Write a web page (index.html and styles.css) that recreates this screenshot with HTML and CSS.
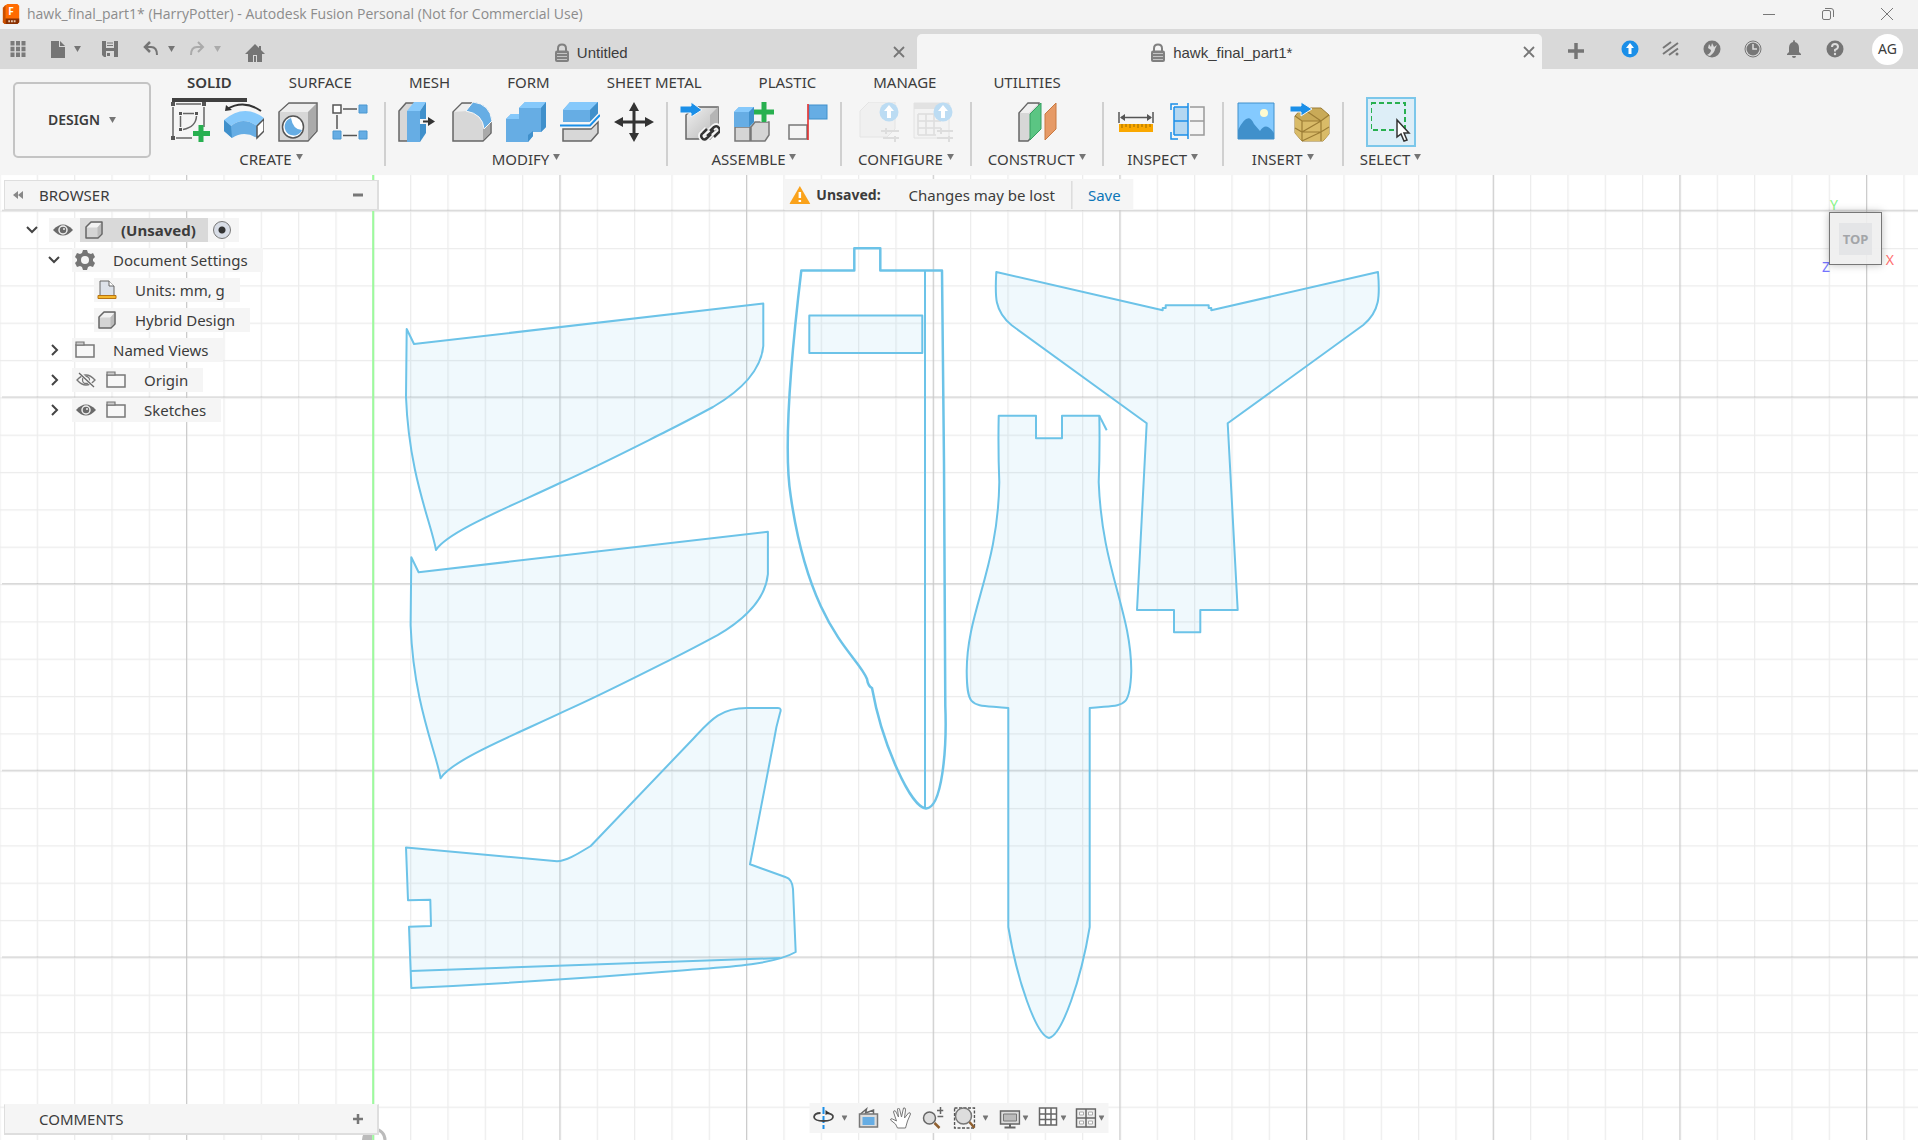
FILE: index.html
```html
<!DOCTYPE html>
<html lang="en">
<head>
<meta charset="utf-8">
<title>hawk_final_part1* (HarryPotter) - Autodesk Fusion Personal (Not for Commercial Use)</title>
<link rel="stylesheet" href="styles.css">
</head>
<body>
<svg class="defs" width="0" height="0" aria-hidden="true">
  <defs>
    <linearGradient id="gray-face" x1="0" y1="0" x2="1" y2="1"><stop offset="0" stop-color="#f0f0f0"/><stop offset="1" stop-color="#b8b8b8"/></linearGradient>
    <symbol id="i-body" viewBox="0 0 20 20"><path d="M2 7L7 2H18V14L14 18H2Z" fill="#d4d4d4" stroke="#666" stroke-width="1.5" stroke-linejoin="round"/><path d="M3 7.500L7.500 3H17L13.500 7.500Z" fill="#f2f2f2"/><path d="M13.500 7.500L17 3.500V13.500L13.500 17Z" fill="#bbb"/></symbol>
    <symbol id="i-eye" viewBox="0 0 20 20"><path d="M0 10Q10-1 20 10Q10 21 0 10Z" fill="#6a6a6a"/><circle cx="10" cy="10" r="4" fill="none" stroke="#eee" stroke-width="1.500"/><circle cx="11" cy="9" r="1" fill="#eee"/></symbol>
    <symbol id="i-eye-off" viewBox="0 0 20 20"><path d="M1 10Q10 0 19 10Q10 20 1 10Z" fill="none" stroke="#777" stroke-width="1.300"/><circle cx="10" cy="10" r="3.500" fill="none" stroke="#777" stroke-width="1.300"/><path d="M3 2L18 17" stroke="#f5f5f5" stroke-width="3"/><path d="M3 3L18 17" stroke="#666" stroke-width="1.300"/></symbol>
    <symbol id="i-folder" viewBox="0 0 20 20"><path d="M1 5V17H19V5Z" fill="#f7f7f7" stroke="#777" stroke-width="1.500"/><path d="M1 5V2H9V5Z" fill="#ccc" stroke="#777" stroke-width="1.200"/></symbol>
    <symbol id="i-lock" viewBox="0 0 16 20"><path d="M4 9V5.500Q4 1.500 8 1.500T12 5.500V9" fill="none" stroke="#808080" stroke-width="2"/><rect x="1" y="7.500" width="14" height="11.500" rx="2" fill="#808080"/><path d="M3 10.500H13M3 13.500H13M3 16.500H13" stroke="#c4c4c4"/></symbol>
    <symbol id="i-x" viewBox="0 0 14 14"><path d="M2 2L12 12M12 2L2 12" stroke="#777" stroke-width="1.800" fill="none"/></symbol>
    <symbol id="i-tri" viewBox="0 0 8 7"><path d="M0 0H8L4 7Z" fill="currentColor"/></symbol>
  </defs>
</svg>

<header class="titlebar">
  <svg class="app-logo" viewBox="0 0 18 22"><path d="M2 2L5 0H16L18 2V20L16 22H2L0 20Z" fill="#ff6b00"/><path d="M0 4L3 1V22H2L0 20Z" fill="#c94f00"/><path d="M3 16H18V20L16 22H3Z" fill="#8a3000"/><text x="6" y="12" class="logo-letter">F</text><path d="M6 19H14" stroke="#e8c8b0" stroke-width="2" stroke-dasharray="2 1"/></svg>
  <h1 class="window-title">hawk_final_part1* (HarryPotter) - Autodesk Fusion Personal (Not for Commercial Use)</h1>
  <div class="window-controls">
    <button aria-label="Minimize"><svg width="14" height="14" viewBox="0 0 14 14"><path d="M1 7.500H13" stroke="#777"/></svg></button>
    <button aria-label="Restore"><svg width="14" height="14" viewBox="0 0 14 14"><rect x="1.500" y="3.500" width="8" height="9" rx="1.500" fill="none" stroke="#777"/><path d="M4 1.500H10Q12.500 1.500 12.500 4V10" fill="none" stroke="#777"/></svg></button>
    <button aria-label="Close window"><svg width="14" height="14" viewBox="0 0 14 14"><path d="M1 1L13 13M13 1L1 13" stroke="#777"/></svg></button>
  </div>
</header>

<div class="tabbar">
  <div class="quick-access">
    <button class="qa-apps" aria-label="Show data panel"><svg width="16" height="16" viewBox="0 0 16 16"><path d="M2.500 0V16M8 0V16M13.500 0V16" stroke="#7a7a7a" stroke-width="4" stroke-dasharray="4.500 1.200"/></svg></button>
    <button class="qa-file" aria-label="File"><svg width="14" height="17" viewBox="0 0 14 17"><path d="M0 0H8V6H14V17H0Z" fill="#757575"/><path d="M9 0L14 5H9Z" fill="#757575"/></svg><svg class="tri"><use href="#i-tri"/></svg></button>
    <button class="qa-save" aria-label="Save document"><svg width="16" height="16" viewBox="0 0 16 16"><path d="M0 0H16V16H2L0 14Z" fill="#757575"/><path d="M4 0H12V7H4ZM4 10H12V16H4Z" fill="#dadada"/><path d="M5 2H11M5 4.500H11" stroke="#757575"/><path d="M5 12H8V15H5Z" fill="#757575"/></svg></button>
    <button class="qa-undo" aria-label="Undo"><svg width="16" height="16" viewBox="0 0 16 16"><path d="M2 6H8Q14 6 14 14" fill="none" stroke="#757575" stroke-width="2"/><path d="M7 1L2 6L7 11" fill="none" stroke="#757575" stroke-width="2.500"/></svg><svg class="tri"><use href="#i-tri"/></svg></button>
    <button class="qa-redo" aria-label="Redo"><svg width="16" height="16" viewBox="0 0 16 16"><path d="M14 6H8Q2 6 2 14" fill="none" stroke="#aaa" stroke-width="2"/><path d="M9 1L14 6L9 11" fill="none" stroke="#aaa" stroke-width="2"/></svg><svg class="tri"><use href="#i-tri"/></svg></button>
    <button class="qa-home" aria-label="Home"><svg width="20" height="18" viewBox="0 0 20 18"><path d="M0 10L10 0L14 4V2H16V6L20 10H17V18H12V11H8V18H3V10Z" fill="#757575"/><path d="M9 12H11V18H9Z" fill="#757575"/></svg></button>
  </div>
  <nav class="doc-tabs">
    <div class="doc-tab"><span class="doc-name"><svg width="16" height="20"><use href="#i-lock"/></svg>Untitled</span><button class="tab-close" aria-label="Close Untitled"><svg width="14" height="14"><use href="#i-x"/></svg></button></div>
    <div class="doc-tab is-active"><span class="doc-name"><svg width="16" height="20"><use href="#i-lock"/></svg>hawk_final_part1*</span><button class="tab-close" aria-label="Close hawk_final_part1"><svg width="14" height="14"><use href="#i-x"/></svg></button></div>
  </nav>
  <div class="account-tools">
    <button class="new-tab" aria-label="New design"><svg width="18" height="18" viewBox="0 0 18 18"><path d="M9 1V17M1 9H17" stroke="#757575" stroke-width="3.500"/></svg></button>
    <button aria-label="Upgrade"><svg width="18" height="18" viewBox="0 0 18 18"><circle cx="9" cy="9" r="8.500" fill="#1b8fe8"/><path d="M9 3L13 8H10.500V14H7.500V8H5Z" fill="#fff"/></svg></button>
    <button aria-label="Extensions"><svg width="18" height="18" viewBox="0 0 18 18"><path d="M1 8L9 2M1 14L16 3M7 15L16 8.500" stroke="#777" stroke-width="2"/><circle cx="15" cy="14" r="1.500" fill="#777"/></svg></button>
    <button aria-label="Online status"><svg width="18" height="18" viewBox="0 0 18 18"><circle cx="9" cy="9" r="8.500" fill="#777"/><path d="M4 15Q8 13 8 10L5 8L6 4L8 7L9 3L11 7L14 5L12 9Q12 12 7 16Z" fill="#d9d9d9"/></svg></button>
    <button aria-label="Job status"><svg width="18" height="18" viewBox="0 0 18 18"><circle cx="9" cy="9" r="8" fill="none" stroke="#777"/><circle cx="9" cy="9" r="6.500" fill="#777"/><path d="M9 4V9H13" fill="none" stroke="#ddd" stroke-width="1.500"/></svg></button>
    <button aria-label="Notifications"><svg width="18" height="18" viewBox="0 0 18 18"><path d="M9 0Q10 0 10 2Q14 3 14 8V12L16 14V15H2V14L4 12V8Q4 3 8 2Q8 0 9 0ZM7 16H11Q11 18 9 18T7 16Z" fill="#757575"/></svg></button>
    <button aria-label="Help"><svg width="18" height="18" viewBox="0 0 18 18"><circle cx="9" cy="9" r="8.500" fill="#757575"/><path d="M6 7Q6 4 9 4T12 7Q12 8.500 9 10V11.500" fill="none" stroke="#ddd" stroke-width="2"/><circle cx="9" cy="14" r="1.200" fill="#ddd"/></svg></button>
    <button class="avatar" aria-label="Account AG">AG</button>
  </div>
</div>

<section class="ribbon">
  <button class="workspace">DESIGN<svg class="tri"><use href="#i-tri"/></svg></button>
  <div class="ribbon-main">
    <nav class="ribbon-tabs">
      <button class="is-active">SOLID</button><button>SURFACE</button><button>MESH</button><button>FORM</button><button>SHEET METAL</button><button>PLASTIC</button><button>MANAGE</button><button>UTILITIES</button>
    </nav>
    <div class="groups">
      <div class="group">
        <div class="tools">
          <button aria-label="Create sketch"><svg viewBox="0 0 40 40"><path d="M3 5V34M6 2H31M34 5V25M6 36H22" fill="none" stroke="#666" stroke-width="1.500"/><path d="M10.500 14V25M13 11.500H24M26.500 14Q26 25 13 27.500" fill="none" stroke="#666" stroke-width="1.500"/><path d="M1 0H5V4H1ZM32 0H36V4H32ZM1 34H5V38H1ZM9 10H12V13H9ZM25 10H28V13H25ZM9 26H12V29H9Z" fill="#555"/><path d="M31 23V40M23 31.500H40" stroke="#28b050" stroke-width="5"/></svg></button>
          <button aria-label="Revolve"><svg viewBox="0 0 40 40"><path d="M0 18Q20 1 40 16L33 24Q19 14 7 24Z" fill="#86c9fb"/><path d="M0 18L7 24Q19 14 33 24V36Q20 28 8 36L0 29Z" fill="#66ade4"/><path d="M0 18L7 24L8 36L0 29Z" fill="#4090cb"/><path d="M33 24L40 17V29L33 36Z" fill="#fff" stroke="#555" stroke-width="1.500"/><path d="M3 7Q20-3 37 9" fill="none" stroke="#333" stroke-width="2"/><path d="M1 9L2 3L8 8Z" fill="#333"/></svg></button>
          <button aria-label="Hole"><svg viewBox="0 0 40 40"><path d="M1 10L11 1H39V29L30 39H1Z" fill="#d7d7d7" stroke="#666" stroke-width="1.500"/><path d="M2 10L11 2H38L30 10Z" fill="#eee"/><path d="M30 10L38 2V29L30 38Z" fill="#aaa"/><ellipse cx="15" cy="25" rx="10.500" ry="11" fill="#fff" stroke="#555" stroke-width="1.500"/><path d="M13 16A9 9 0 1 0 24 28Q15 28 13 16Z" fill="#66ade4"/></svg></button>
          <button aria-label="Rectangular pattern"><svg viewBox="0 0 40 40"><path d="M11 7H25M5 13V27M11 33.500H25" stroke="#555" stroke-width="1.500"/><rect x="1" y="3" width="8" height="8" fill="#fff" stroke="#555" stroke-width="1.500"/><path d="M27 3H35V11H27ZM1 29H9V37H1ZM27 29H35V37H27Z" fill="#66ade4" stroke="#4b97d0"/></svg></button>
        </div>
        <button class="group-menu">CREATE<svg class="tri"><use href="#i-tri"/></svg></button>
      </div>
      <div class="group">
        <div class="tools">
          <button aria-label="Press pull"><svg viewBox="0 0 40 40"><path d="M1 9L8 1H16V37L10 39H1Z" fill="#d7d7d7" stroke="#666" stroke-width="1.500"/><path d="M9 9L16 0H28L22 9Z" fill="#86c9fb"/><path d="M9 9H22V40H9Z" fill="#66ade4"/><path d="M22 9L28 0V31L22 40Z" fill="#4090cb"/><path d="M22 19.500H34" stroke="#f5f5f5" stroke-width="5"/><path d="M25 19.500H33" stroke="#333" stroke-width="2"/><path d="M30 15L37 19.500L30 24Z" fill="#333"/></svg></button>
          <button aria-label="Fillet"><svg viewBox="0 0 40 40"><path d="M1 10L10 1H22Q39 4 39 22V31L31 39H1Z" fill="#d7d7d7" stroke="#666" stroke-width="1.500"/><path d="M2 10L10 2H22L15 9Z" fill="#eee"/><path d="M31 25L38 18V31L31 38Z" fill="#aaa"/><path d="M14 9L21 0Q38 2 40 19L32 27Q31 12 14 9Z" fill="#66ade4" stroke="#f8f8f8"/></svg></button>
          <button aria-label="Combine"><svg viewBox="0 0 40 40"><path d="M0 17L5 12H13V6L19 0H40V25L35 30H27V34L22 40H0Z" fill="#66ade4"/><path d="M0 17L5 12H13V17ZM13 6L19 0H40L35 6Z" fill="#86c9fb"/><path d="M35 6L40 0V25L35 30ZM22 33L27 29V34L22 40Z" fill="#4090cb"/></svg></button>
          <button aria-label="Split body"><svg viewBox="0 0 40 40"><path d="M3 8L10 0H38V14L30 20H3Z" fill="#66ade4"/><path d="M3 8L10 0H38L30 8Z" fill="#86c9fb"/><path d="M30 8L38 0V13L30 20Z" fill="#4090cb"/><path d="M3 27H31L38 20V31L31 39H3Z" fill="#d7d7d7" stroke="#666" stroke-width="1.500"/><path d="M0 23.500H30L40 13" fill="none" stroke="#f7f7f7" stroke-width="5"/><path d="M0 23.500H30L40 13" fill="none" stroke="#1b8fe8" stroke-width="2"/></svg></button>
          <button aria-label="Move"><svg viewBox="0 0 40 40"><path d="M20 5V35M5 20H35" stroke="#333" stroke-width="3"/><path d="M20 0L25 9H15ZM20 40L15 31H25ZM0 20L9 15V25ZM40 20L31 25V15Z" fill="#333"/></svg></button>
        </div>
        <button class="group-menu">MODIFY<svg class="tri"><use href="#i-tri"/></svg></button>
      </div>
      <div class="group">
        <div class="tools">
          <button aria-label="Insert component"><svg viewBox="0 0 40 40"><path d="M6 13L14 5H38V28L30 37H6Z" fill="url(#gray-face)" stroke="#666" stroke-width="1.500"/><path d="M30 13L38 5V28L30 37Z" fill="#b5b5b5"/><path d="M0 4H11V0L22 8L11 15V11H0Z" fill="#1b8fe8" stroke="#f5f5f5"/><path d="M30 29L34 25Q37 23 39 26Q41 29 38 31L34 35M31 32L27 36Q24 39 22 36Q20 33 23 31L27 27M27 34L34 28" fill="none" stroke="#f5f5f5" stroke-width="6"/><path d="M30 29L34 25Q37 23 39 26Q41 29 38 31L34 35M31 32L27 36Q24 39 22 36Q20 33 23 31L27 27M27 34L34 28" fill="none" stroke="#333" stroke-width="2.500"/></svg></button>
          <button aria-label="New component"><svg viewBox="0 0 40 40"><path d="M1 25H16V39H1ZM17 25L21 20H35V33L31 39H17Z" fill="#d5d5d5" stroke="#777" stroke-width="1.500"/><path d="M0 10L5 5H20V20L15 25H0Z" fill="#66ade4"/><path d="M0 10L5 5H20L15 10Z" fill="#86c9fb"/><path d="M15 10L20 5V20L15 25Z" fill="#4090cb"/><path d="M30 0V20M20 10H40" stroke="#f5f5f5" stroke-width="7"/><path d="M30 0V20M20 10H40" stroke="#28b050" stroke-width="5"/></svg></button>
          <button aria-label="Joint"><svg viewBox="0 0 40 40"><rect x="1" y="23" width="18" height="14" fill="#f5f5f5" stroke="#777" stroke-width="1.500"/><rect x="21" y="3" width="18" height="14" fill="#66ade4" stroke="#4090cb"/><path d="M20 2V38" stroke="#e02020" stroke-width="1.500"/></svg></button>
        </div>
        <button class="group-menu">ASSEMBLE<svg class="tri"><use href="#i-tri"/></svg></button>
      </div>
      <div class="group">
        <div class="tools is-off">
          <button disabled aria-label="Configure design"><svg viewBox="0 0 40 40"><path d="M1 9L10 0H36V27L28 35H1Z" fill="#f0f0f0" stroke="#e4e4e4"/><circle cx="30" cy="10" r="9.500" fill="#bcdcf3"/><path d="M30 3L35 9H32V16H28V9H25Z" fill="#fff"/><path d="M22 29H40M24 36H40M27 26V32M36 34V40" stroke="#ddd" stroke-width="2"/></svg></button>
          <button disabled aria-label="Configuration table"><svg viewBox="0 0 40 40"><path d="M1 1H36V36H1Z" fill="#f3f3f3" stroke="#e2e2e2"/><path d="M1 1H36V7H1Z" fill="#e2e2e2"/><path d="M5 12H23M5 19H28M5 26H28M5 33H23M5 12V33M13 12V33M21 12V33" stroke="#ddd" stroke-width="1.500"/><circle cx="30" cy="10" r="9.500" fill="#bcdcf3"/><path d="M30 3L35 9H32V16H28V9H25Z" fill="#fff"/><path d="M24 29H40M24 36H40M28 26V32M36 34V40" stroke="#ddd" stroke-width="2"/></svg></button>
        </div>
        <button class="group-menu">CONFIGURE<svg class="tri"><use href="#i-tri"/></svg></button>
      </div>
      <div class="group">
        <div class="tools">
          <button aria-label="Offset plane"><svg viewBox="0 0 40 40"><path d="M2 11L11 1H22V28L11 39H2Z" fill="#d7d7d7" stroke="#666" stroke-width="1.500"/><path d="M3 11L11 2H21L12 11Z" fill="#f0f0f0"/><path d="M13 12L24 1V27L13 38Z" fill="#5bc583" stroke="#35a060"/><path d="M28 12L39 1V27L28 38Z" fill="#e69a66" stroke="#c87840"/></svg></button>
        </div>
        <button class="group-menu">CONSTRUCT<svg class="tri"><use href="#i-tri"/></svg></button>
      </div>
      <div class="group">
        <div class="tools">
          <button aria-label="Measure"><svg viewBox="0 0 40 40"><path d="M3 10V21M37 10V21M5 15.500H35" stroke="#555" stroke-width="1.500"/><path d="M4 15.500L9 12V19ZM36 15.500L31 12V19Z" fill="#555"/><path d="M3 22H37V30H3Z" fill="#faa800"/><path d="M6 22V26M10 22V25M14 22V26M18 22V25M22 22V26M26 22V25M30 22V26M34 22V25" stroke="#9a6a00"/></svg></button>
          <button aria-label="Section analysis"><svg viewBox="0 0 40 40"><path d="M4 5H18V33H4Z" fill="#b4d7f1"/><path d="M4 5H18V33H4M4 5V33M4 19H18M1 8V2H8M1 30V37H8M18 1V37" fill="none" stroke="#1b8fe8" stroke-width="1.500"/><path d="M20 5H34V33H20M20 19H34" fill="none" stroke="#999" stroke-width="1.500"/></svg></button>
        </div>
        <button class="group-menu">INSPECT<svg class="tri"><use href="#i-tri"/></svg></button>
      </div>
      <div class="group">
        <div class="tools">
          <button aria-label="Insert canvas"><svg viewBox="0 0 40 40"><path d="M2 1H38V37H2Z" fill="#84caff" stroke="#4090cb"/><circle cx="28" cy="11" r="4" fill="#fffbd0"/><path d="M2 28Q12 8 18 22L24 29Q30 19 38 31V37H2Z" fill="#4090cb"/></svg></button>
          <button aria-label="Insert mesh"><svg viewBox="0 0 40 40"><path d="M5 14L12 6H31L39 13V32L33 39H12L5 31Z" fill="#c9aa58" stroke="#9c7d35"/><path d="M12 19L31 19L39 13V32L33 39H12L5 31V14Z" fill="#d9bb68"/><path d="M5 14L12 19L31 19L39 13M12 19V39M31 19V39M5 26L12 30L31 19M12 30H31L39 25M12 39L31 30M12 6L31 19" fill="none" stroke="#9c7d35" stroke-width="1.200"/><path d="M0 4H11V0L22 7L11 14V10H0Z" fill="#1b8fe8" stroke="#f5f5f5"/></svg></button>
        </div>
        <button class="group-menu">INSERT<svg class="tri"><use href="#i-tri"/></svg></button>
      </div>
      <div class="group">
        <div class="tools">
          <button class="is-on" aria-label="Select"><svg viewBox="0 0 40 40"><rect x="0" y="1" width="34" height="27" fill="none" stroke="#28b050" stroke-width="2" stroke-dasharray="5 3"/><path d="M26 18V35L30 32L33 39L36 38L33 31H38Z" fill="#fff" stroke="#333" stroke-width="1.500"/></svg></button>
        </div>
        <button class="group-menu">SELECT<svg class="tri"><use href="#i-tri"/></svg></button>
      </div>
    </div>
  </div>
</section>

<main class="workspace-view">
  <svg class="canvas" aria-label="Sketch canvas">
    <defs>
      <pattern id="minor" width="37.333" height="37.333" patternUnits="userSpaceOnUse" x="-.6" y="-1.700"><path d="M.6 0V37.333M0 .6H37.333" fill="none" stroke="#000" stroke-opacity=".075" stroke-width="1.200"/></pattern>
      <pattern id="major" width="186.667" height="186.667" patternUnits="userSpaceOnUse" x="-.6" y="34.700"><path d="M.6 0V186.667M0 .6H186.667" fill="none" stroke="#000" stroke-opacity=".15" stroke-width="1.200"/></pattern>
    </defs>
    <rect width="100%" height="100%" fill="url(#minor)"/>
    <rect x="2" width="100%" height="100%" fill="url(#major)"/>
    <path d="M373.200 0V2000" stroke="#9dfb9d" stroke-width="2"/>
    <g class="sketch" transform="translate(0 -175)">
      <path id="wing" d="M406.700 329L414 344L763.300 303.600V346C761 370 742 390 713 407C700 414 681 424 667 431C631 449 596 467 560 483C514 505 448 531 436 550C431 522 409 475 406 397Z"/>
      <use href="#wing" x="4.600" y="228.200"/>
      <path d="M406 847.500L557 861.300C566 861 576 855 590.700 846L693 739C709 722 719 708 747 708H778Q782 708 780 713Q776 727 774 740L750 864.300L786 877.300Q792 879 793 889L795.700 952C775 964 730 967 700 969C650 973 560 981 411.300 988L409 926.700L431 926L430.300 899.700L408 900.300Z"/>
      <path d="M410.700 971L780 958"/>
      <path class="open" d="M801.300 270.600H854.300V248.300H880.300V270.600H942L944 464L945.300 706C947 750 942 808 926 808.500C911 808 882 744 872 688Q868 686 867 679C858 655 810 630 790.700 496C785 460 787 390 801.300 270.600Z"/>
      <path d="M925 270.600V808"/>
      <path d="M809.300 315.500H922.300V353H809.300Z"/>
      <path d="M998.700 415.700H1036V438.300H1062V415.700H1099.300Q1100 449 1098.700 482C1102 570 1131 610 1131.300 671C1130 711 1124 704 1089.700 708V927C1081 980 1062 1035 1049 1038C1036 1035 1017 980 1008.300 927V708C972 704 967 711 966.700 671C967 610 998 570 999.300 482Q998 449 998.700 415.700Z"/>
      <path d="M1099.300 415.700L1106.700 430.300"/>
      <path d="M996.300 272L1162.700 310.300V308H1165.700V305.300H1208.700V308H1211.300V310.300L1378 272C1380 296 1380 311 1363.300 325L1227.700 423.300L1237.700 610H1200.300V632.300H1174V610H1137L1146.700 423.300L1011.700 325.300C994 311 995 296 996.300 272Z"/>
    </g>
    <path d="M362 965A12 12 0 0 1 372 953V965Z" fill="#bbb"/>
    <path d="M375 954A11 11 0 0 1 385 965" fill="none" stroke="#bbb" stroke-width="3"/>
  </svg>

  <aside class="side">
    <div class="panel-bar">
      <button class="collapse" aria-label="Collapse browser"><svg width="10" height="8" viewBox="0 0 10 8"><path d="M5 0V8L0 4ZM10 0V8L5 4Z" fill="#888"/></svg></button>
      <h2>BROWSER</h2>
      <button class="panel-action" aria-label="Minimize browser"><svg width="12" height="12" viewBox="0 0 12 12"><path d="M1 6H11" stroke="#777" stroke-width="3"/></svg></button>
    </div>
    <ul class="tree">
      <li class="root"><button class="twist" aria-label="Toggle"><svg width="12" height="12" viewBox="0 0 12 12"><path d="M1 3L6 8L11 3"/></svg></button><div class="node"><button class="cell eye" aria-label="Visibility"><svg><use href="#i-eye"/></svg></button><span class="selected"><svg><use href="#i-body"/></svg><b>(Unsaved)</b></span><input type="radio" checked aria-label="Activate component"></div></li>
      <li class="lvl1"><button class="twist" aria-label="Toggle"><svg width="12" height="12" viewBox="0 0 12 12"><path d="M1 3L6 8L11 3"/></svg></button><div class="node"><span class="cell"><svg viewBox="0 0 20 20"><path d="M8 0H12L13 3L16 4L18 3L20 7L18 9V11L20 13L18 17L15 16L13 17L12 20H8L7 17L5 16L2 17L0 13L2 11V9L0 7L2 3L5 4L7 3Z" fill="#757575"/><circle cx="10" cy="10" r="4" fill="#f5f5f5"/></svg></span><span class="label">Document Settings</span></div></li>
      <li class="lvl2"><div class="node"><span class="cell"><svg viewBox="0 0 20 20"><path d="M3 15V1H12L17 6V15" fill="#dde2ea" stroke="#666"/><path d="M12 1V6H17" fill="#fff" stroke="#666"/><path d="M1 15.500H19V18.500H1Z" fill="#f5b82e" stroke="#b87412"/></svg></span><span class="label">Units: mm, g</span></div></li>
      <li class="lvl2"><div class="node"><span class="cell"><svg><use href="#i-body"/></svg></span><span class="label">Hybrid Design</span></div></li>
      <li class="lvl1"><button class="twist" aria-label="Toggle"><svg width="12" height="12" viewBox="0 0 12 12"><path d="M4 1L9 6L4 11"/></svg></button><div class="node"><span class="cell"><svg><use href="#i-folder"/></svg></span><span class="label">Named Views</span></div></li>
      <li class="lvl1"><button class="twist" aria-label="Toggle"><svg width="12" height="12" viewBox="0 0 12 12"><path d="M4 1L9 6L4 11"/></svg></button><div class="node"><button class="cell eye" aria-label="Visibility"><svg><use href="#i-eye-off"/></svg></button><span class="cell"><svg><use href="#i-folder"/></svg></span><span class="label">Origin</span></div></li>
      <li class="lvl1"><button class="twist" aria-label="Toggle"><svg width="12" height="12" viewBox="0 0 12 12"><path d="M4 1L9 6L4 11"/></svg></button><div class="node"><button class="cell eye" aria-label="Visibility"><svg><use href="#i-eye"/></svg></button><span class="cell"><svg><use href="#i-folder"/></svg></span><span class="label">Sketches</span></div></li>
    </ul>
    <div class="panel-bar comments">
      <h2>COMMENTS</h2>
      <button class="panel-action" aria-label="Expand comments"><svg width="12" height="12" viewBox="0 0 12 12"><path d="M1 6H11M6 1V11" stroke="#777" stroke-width="2.500"/></svg></button>
    </div>
  </aside>

  <div class="unsaved">
    <svg width="21" height="18" viewBox="0 0 21 18"><path d="M10.500 0L21 18H0Z" fill="#faa21b"/><path d="M10.500 6V12M10.500 14V16" stroke="#fff" stroke-width="2.500"/></svg>
    <b>Unsaved:</b><span>Changes may be lost</span><a href="#save">Save</a>
  </div>

  <div class="viewcube">
    <span class="axis axis-y">Y</span>
    <span class="axis axis-x">X</span>
    <span class="axis axis-z">Z</span>
    <button class="cube"><span>TOP</span></button>
  </div>

  <div class="navbar">
    <button class="has-menu wide" aria-label="Orbit"><svg viewBox="0 0 22 22"><path d="M11 0V22" stroke="#1b8fe8" stroke-width="2" stroke-dasharray="7 2"/><path d="M14 6Q21 7 20.500 10Q20 14 11 14T1.500 10Q2 6 8 6" fill="none" stroke="#444" stroke-width="1.800"/><path d="M13 3V8L17 6Z" fill="#333"/></svg><svg class="tri"><use href="#i-tri"/></svg></button>
    <button aria-label="Look at"><svg viewBox="0 0 22 22"><path d="M3 7L9 2L8 6L16 3V7" fill="none" stroke="#666" stroke-width="1.500"/><rect x="2" y="7" width="18" height="13" fill="#ddd" stroke="#777" stroke-width="1.500"/><rect x="5" y="10" width="12" height="8" fill="#66ade4"/></svg></button>
    <button aria-label="Pan"><svg viewBox="0 0 22 22"><path d="M8 21L6 17L1 13Q1 11 3 12L7 14L4 5Q4 3 6 4L9 10L8 2Q9 0 10 2L12 10L14 1Q16 0 16 3L15 11L19 6Q21 5 21 7L18 14L16 21Z" fill="#fff" stroke="#777"/></svg></button>
    <button aria-label="Zoom"><svg viewBox="0 0 22 22"><circle cx="8" cy="11" r="6" fill="#ddd" stroke="#666" stroke-width="1.500"/><path d="M13 16L18 21" stroke="#906030" stroke-width="2.500"/><path d="M19 0V7M15.500 3.500H22M16 9.500H22" stroke="#666" stroke-width="1.500"/></svg></button>
    <button class="has-menu wide" aria-label="Fit"><svg viewBox="0 0 22 22"><path d="M1 1H21V21H1Z" fill="none" stroke="#555" stroke-width="1.500" stroke-dasharray="3 1.500"/><circle cx="10" cy="9" r="8" fill="#ddd" stroke="#777" stroke-width="1.500"/><path d="M16 15L21 21" stroke="#906030" stroke-width="2.500"/></svg><svg class="tri"><use href="#i-tri"/></svg></button>
    <button class="has-menu" aria-label="Display settings"><svg viewBox="0 0 22 22"><path d="M2 4H21V17H2Z" fill="#ddd" stroke="#666" stroke-width="1.500"/><path d="M5 7H18V14H5Z" fill="#bbb" stroke="#777"/><path d="M11.500 17V20M6 20.500H17" stroke="#666" stroke-width="2"/></svg><svg class="tri"><use href="#i-tri"/></svg></button>
    <button class="has-menu" aria-label="Grid and snaps"><svg viewBox="0 0 22 22"><path d="M3 1H20V18H3ZM9 1V18M14.500 1V18M3 7H20M3 12.500H20" fill="#fff" stroke="#666" stroke-width="1.500"/></svg><svg class="tri"><use href="#i-tri"/></svg></button>
    <button class="has-menu" aria-label="Viewports"><svg viewBox="0 0 22 22"><path d="M2 2H21V20H2ZM11.500 2V20M2 11H21" fill="#eee" stroke="#666" stroke-width="1.500"/><path d="M5 5H9V8H5ZM14 5H18V8H14ZM5 14H9V17H5ZM14 14H18V17H14Z" fill="#fff" stroke="#aaa"/></svg><svg class="tri"><use href="#i-tri"/></svg></button>
  </div>
</main>
</body>
</html>
```

FILE: styles.css
```css
* { box-sizing: border-box; }

body {
  margin: 0;
  min-height: 100vh;
  display: flex;
  flex-direction: column;
  font: 15px/20px "Noto Sans", "Open Sans", sans-serif;
  color: #3c3c3c;
  background: #fff;
  overflow: hidden;
}

button {
  margin: 0;
  padding: 0;
  border: 0;
  background: none;
  font: inherit;
  color: inherit;
  display: inline-flex;
  align-items: center;
  justify-content: center;
}

svg { display: block; flex: none; }
h1, h2 { margin: 0; font-size: 15px; font-weight: 400; }

.defs { position: absolute; }
.tri { width: 7px; height: 6px; color: #757575; }

/* Title bar */
.titlebar {
  height: 29px;
  display: flex;
  align-items: center;
  background: #f3f3f3;
  padding: 0 2px 1px;
}
.app-logo { width: 18px; height: 20px; }
.logo-letter { font: bold 11px "Noto Sans", sans-serif; fill: #fff; }
.window-title {
  flex: 1;
  margin-left: 7px;
  font-family: "Open Sans", sans-serif;
  font-size: 14px;
  color: #8c8c8c;
}
.window-controls { display: flex; }
.window-controls button { width: 59px; height: 28px; }

/* Document tabs */
.tabbar { height: 40px; display: flex; background: #d9d9d9; }
.quick-access {
  flex: 0 0 290px;
  display: flex;
  align-items: center;
  padding-left: 10px;
}
.quick-access button { height: 40px; gap: 9px; }
.qa-file { margin-left: 25px; }
.qa-save { margin-left: 21px; }
.qa-undo { margin-left: 25px; }
.qa-redo { margin-left: 14px; }
.qa-redo .tri { color: #aaa; }
.qa-home { margin-left: 24px; padding-top: 8px; }

.doc-tabs { flex: 1; display: flex; padding-top: 5px; }
.doc-tab {
  flex: 1;
  display: flex;
  align-items: center;
  padding-right: 11px;
  font-family: "Liberation Sans", Arial, sans-serif;
  border-radius: 5px 5px 0 0;
}
.doc-tab.is-active { padding: 0 6px 0 4px; background: #f5f5f5; }
.doc-name {
  flex: 1;
  display: flex;
  align-items: center;
  justify-content: center;
  gap: 7px;
  padding-top: 2px;
}
.tab-close { width: 14px; height: 24px; }

.account-tools {
  flex: 0 0 376px;
  display: flex;
  align-items: center;
  padding-left: 12px;
}
.account-tools button { width: 41px; height: 40px; padding-bottom: 1px; }
.account-tools .new-tab { width: 44px; margin-right: 11px; padding: 4px 0 0; }
.account-tools .avatar {
  width: 31px;
  height: 31px;
  margin-left: 17px;
  padding: 0;
  border-radius: 50%;
  background: #fff;
  font-size: 14px;
}

/* Ribbon */
.ribbon { height: 106px; display: flex; background: #f5f5f5; }
.ribbon .workspace {
  width: 138px;
  height: 76px;
  margin: 13px 0 0 13px;
  gap: 9px;
  border: 2px solid #c4c4c4;
  border-radius: 5px;
  font-size: 14px;
  font-weight: 600;
}
.ribbon-main { margin-left: 7px; }
.ribbon-tabs { display: flex; padding-left: 14px; gap: 27px; }
.ribbon-tabs button {
  padding: 3px 15px 6px;
  border-bottom: 4px solid transparent;
}
.ribbon-tabs .is-active { font-weight: 600; border-color: #404040; }
.groups { display: flex; height: 64px; }
.group {
  display: flex;
  flex-direction: column;
  align-items: center;
  padding: 0 12px;
  border-right: 2px solid #d0d0d0;
}
.group:last-child { border-right: 0; }
.tools { flex: none; display: flex; height: 47px; gap: 14px; }
.tools button { width: 40px; height: 40px; }
.tools svg { width: 40px; height: 40px; }
.tools .is-on {
  width: 50px;
  height: 50px;
  margin: -5px 0;
  border: 2px solid #7cc7ea;
  background: #ddeef7;
}
.group-menu { flex: none; gap: 4px; padding: 0 4px; height: 20px; }
.group-menu .tri { margin-bottom: 4px; }

/* Modelling view */
.workspace-view { position: relative; flex: 1; display: flex; }
.canvas { position: absolute; inset: 0; width: 100%; height: 100%; }
.sketch {
  fill: #5ab8ee;
  fill-opacity: .09;
  stroke: #6cc3e8;
  stroke-width: 2;
  stroke-linejoin: round;
}
.sketch .open { fill: none; stroke-width: 2.5; }

.side {
  position: relative;
  width: 375px;
  margin-left: 4px;
  padding: 5px 0 5px;
  display: flex;
  flex-direction: column;
}
.panel-bar {
  height: 31px;
  display: flex;
  align-items: center;
  background: #f5f5f5;
  border: solid #dedede;
  border-width: 1px 2px 2px 1px;
}
.panel-bar h2 { flex: 1; }
.collapse { width: 34px; padding-right: 9px; }
.panel-action { width: 12px; margin-right: 13px; }
.comments { margin-top: auto; padding-left: 34px; border-top-color: #f5f5f5; }

.tree { list-style: none; margin: 4px 0 0; padding: 0; }
.tree li { display: flex; align-items: center; height: 30px; }
.twist { width: 24px; }
.twist path { fill: none; stroke: #444; stroke-width: 2; }
.root { padding-left: 16px; }
.lvl1 { padding-left: 38px; }
.lvl2 { padding-left: 90px; }
.node { display: flex; align-items: center; height: 24px; background: #f5f5f5; }
.root .node { margin-left: 5px; }
.lvl1 .node { margin-left: 6px; }
.cell { display: flex; width: 31px; padding-left: 3px; justify-content: flex-start; }
.node svg { width: 20px; height: 20px; }
.eye { padding-left: 4px; }
.label { padding: 0 15px 1px 10px; }
.selected {
  display: flex;
  align-items: center;
  gap: 17px;
  height: 24px;
  padding: 0 12px 1px 4px;
  background: #d9d9d9;
}
.node input {
  appearance: none;
  width: 18px;
  height: 18px;
  margin: 0 8px 0 5px;
  border: 1px solid #777;
  border-radius: 50%;
  background: radial-gradient(circle, #333 0 3px, #d8dde6 4px);
}

.unsaved {
  position: absolute;
  top: 4px;
  left: 50%;
  transform: translateX(-50%);
  display: flex;
  align-items: center;
  height: 31px;
  padding: 0 13px 0 5px;
  background: #f5f5f5;
  white-space: nowrap;
}
.unsaved b { margin: 0 28px 0 6px; font-size: 14px; }
.unsaved a {
  margin-left: 16px;
  padding-left: 16px;
  border-left: 1px solid #d0d0d0;
  line-height: 28px;
  color: #0c76b8;
  text-decoration: none;
}

.viewcube { position: absolute; top: 37px; right: 36px; }
.cube {
  position: relative;
  width: 53px;
  height: 53px;
  border: 1px solid #777;
  background: rgba(238, 238, 238, .9);
  box-shadow: 0 0 8px rgba(0, 0, 0, .25);
  font-size: 13px;
  font-weight: 700;
  color: #a3a5a9;
}
.cube span { padding: 6px 4px; background: #e4e5e7; }
.axis { position: absolute; font-size: 14px; line-height: 14px; }
.axis-y { left: 1px; top: -14px; color: #86f586; }
.axis-x { right: -12px; top: 41px; color: #ff7070; }
.axis-z { left: -7px; bottom: -9px; color: #7474ff; }

.navbar {
  position: absolute;
  left: 50%;
  bottom: 7px;
  transform: translateX(-50%);
  display: flex;
  align-items: center;
  height: 30px;
  padding: 0 6px 0 3px;
  gap: 10px;
  background: #f5f5f5;
}
.navbar svg { width: 22px; height: 22px; }
.navbar .has-menu { gap: 2px; margin-right: -2px; }
.navbar .wide { gap: 7px; margin-right: 0; }
.navbar .tri { width: 6px; height: 6px; }
```
